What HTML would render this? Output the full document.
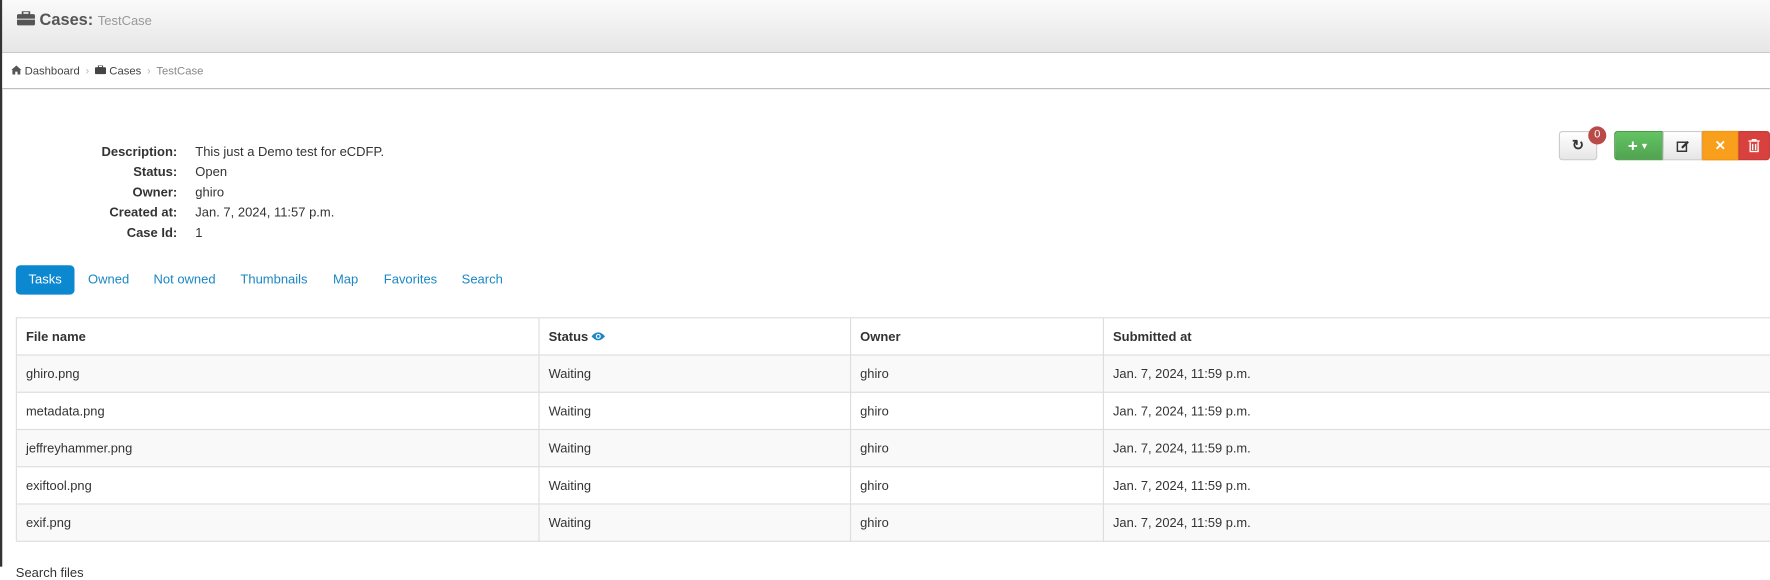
<!DOCTYPE html>
<html><head><meta charset="utf-8"><style>
body{margin:0;width:1770px;height:567px;overflow:hidden;background:#fff;font-family:"Liberation Sans",Arial,sans-serif;color:#333;position:relative}
#w{position:absolute;left:0;top:0;width:1568px;height:502px;transform:scale(1.1288);transform-origin:0 0}
.lb{position:absolute;left:0;top:0;width:2px;height:502px;background:#333}
.hdr{position:absolute;left:2px;top:0;right:0;height:46px;background:linear-gradient(#fafafa,#e6e6e6);border-bottom:1px solid #c8c8c8}
.hdr h1{margin:0;position:absolute;left:13px;top:10px;font-size:14.5px;font-weight:bold;color:#555}
.hdr h1 span{font-weight:normal;color:#999;font-size:11.5px}
.bc{position:absolute;left:2px;right:0;top:47px;height:31px;background:#fff;border-bottom:1px solid #bbb;font-size:10px;color:#444}
.bc div{position:absolute;top:11px;left:8px}
.bc .s{color:#bbb;margin:0 5px}
.bc .g{color:#888}
.info{position:absolute;top:126px;font-size:11.5px;line-height:18px}
.lab{left:40px;width:117px;text-align:right;font-weight:bold}
.val{left:173px}
.btn{position:absolute;top:116px;height:26px;box-sizing:border-box;border:1px solid #ccc;display:flex;align-items:center;justify-content:center;font-size:13px;font-weight:bold}
.tabs{position:absolute;top:235px;left:14px;font-size:11.5px;color:#1a87c5}
.tabs span{position:absolute;top:6px;line-height:14px;white-space:nowrap}
.pill{position:absolute;left:0;top:0;width:52px;height:26px;background:#0b88cf;border-radius:4px;color:#fff;text-align:center;line-height:26px}
table{position:absolute;left:14px;top:281px;width:1570px;border-collapse:collapse;font-size:11.4px;border-top:1px solid #ddd;border-left:1px solid #ddd}
td,th{border-right:1px solid #ddd;border-bottom:1px solid #ddd;height:31px;box-sizing:content-box;padding:1px 8px 0;text-align:left}
th{font-size:11.5px;font-weight:bold}
tr:nth-child(even) td{background:#f9f9f9}
</style></head><body>
<div id="w">
<div class="lb"></div>
<div class="hdr"><h1><svg width="16" height="13" viewBox="0 0 16 13" style="vertical-align:-1px"><rect x="5" y="0" width="6" height="3" fill="none" stroke="#555" stroke-width="1.5"/><rect x="0" y="2.5" width="16" height="10" rx="1.5" fill="#555"/><rect x="0" y="6.5" width="16" height="1" fill="#ddd"/></svg> Cases: <span>TestCase</span></h1></div>
<div class="bc"><div><svg width="9" height="8" viewBox="0 0 9 8"><path d="M0 4L4.5 0L9 4H8V8H5.5V5.5H3.5V8H1V4Z" fill="#555"/></svg> Dashboard<span class="s">›</span><svg width="10" height="8" viewBox="0 0 16 13"><rect x="5" y="0" width="6" height="3" fill="none" stroke="#444" stroke-width="1.5"/><rect x="0" y="2.5" width="16" height="10" rx="1.5" fill="#444"/></svg> Cases<span class="s">›</span><span class="g">TestCase</span></div></div>
<div class="info lab">Description:<br>Status:<br>Owner:<br>Created at:<br>Case Id:</div>
<div class="info val">This just a Demo test for eCDFP.<br>Open<br>ghiro<br>Jan. 7, 2024, 11:57 p.m.<br>1</div>
<div class="btn" style="left:1381px;width:34px;background:linear-gradient(#fff,#e6e6e6);border-radius:3px;color:#333">&#x21BB;</div>
<div style="position:absolute;left:1407px;top:112px;width:16px;height:16px;border-radius:8px;background:#b94a48;color:#fff;font-size:10px;text-align:center;line-height:16px">0</div>
<div class="btn" style="left:1430px;width:43px;background:linear-gradient(#62c462,#51a351);border-color:#4a9a4a;color:#fff;border-radius:3px 0 0 3px;font-size:15px">+<span style="font-size:8px;margin-left:2px">▼</span></div>
<div class="btn" style="left:1473px;width:35px;background:linear-gradient(#fff,#e6e6e6);color:#333;font-weight:normal"><svg width="12" height="11" viewBox="0 0 12 11"><rect x="1" y="2" width="8" height="8" fill="none" stroke="#333" stroke-width="1.3"/><path d="M5 7L10.5 1.5" stroke="#333" stroke-width="2"/></svg></div>
<div class="btn" style="left:1508px;width:32px;background:#f89f1b;border-color:#f0951a;color:#fff;font-size:12px">✕</div>
<div class="btn" style="left:1540px;width:28px;background:#d9413e;border-color:#c43c35;border-radius:0 3px 3px 0"><svg width="10" height="12" viewBox="0 0 10 12"><path d="M0 2H10M3.5 2V0.7H6.5V2M1.5 3V11.3H8.5V3M3.7 4.5V10M6.3 4.5V10" fill="none" stroke="#fff" stroke-width="1.2"/></svg></div>
<div class="tabs"><div class="pill">Tasks</div><span style="left:64px">Owned</span><span style="left:122px">Not owned</span><span style="left:199px">Thumbnails</span><span style="left:281px">Map</span><span style="left:326px">Favorites</span><span style="left:395px">Search</span></div>
<table>
<colgroup><col style="width:463px"><col style="width:276px"><col style="width:224px"><col></colgroup>
<tr><th>File name</th><th>Status <svg width="12" height="8" viewBox="0 0 12 8" style="vertical-align:0"><path d="M0 4Q6 -3 12 4Q6 11 0 4Z" fill="#1a87c5"/><circle cx="6" cy="4" r="2.2" fill="#fff"/><circle cx="6" cy="4" r="1.2" fill="#1a87c5"/></svg></th><th>Owner</th><th>Submitted at</th></tr>
<tr><td>ghiro.png</td><td>Waiting</td><td>ghiro</td><td>Jan. 7, 2024, 11:59 p.m.</td></tr>
<tr><td>metadata.png</td><td>Waiting</td><td>ghiro</td><td>Jan. 7, 2024, 11:59 p.m.</td></tr>
<tr><td>jeffreyhammer.png</td><td>Waiting</td><td>ghiro</td><td>Jan. 7, 2024, 11:59 p.m.</td></tr>
<tr><td>exiftool.png</td><td>Waiting</td><td>ghiro</td><td>Jan. 7, 2024, 11:59 p.m.</td></tr>
<tr><td>exif.png</td><td>Waiting</td><td>ghiro</td><td>Jan. 7, 2024, 11:59 p.m.</td></tr>
</table>
<div style="position:absolute;left:14px;top:502px;font-size:11.5px">Search files</div>
</div>
</body></html>
